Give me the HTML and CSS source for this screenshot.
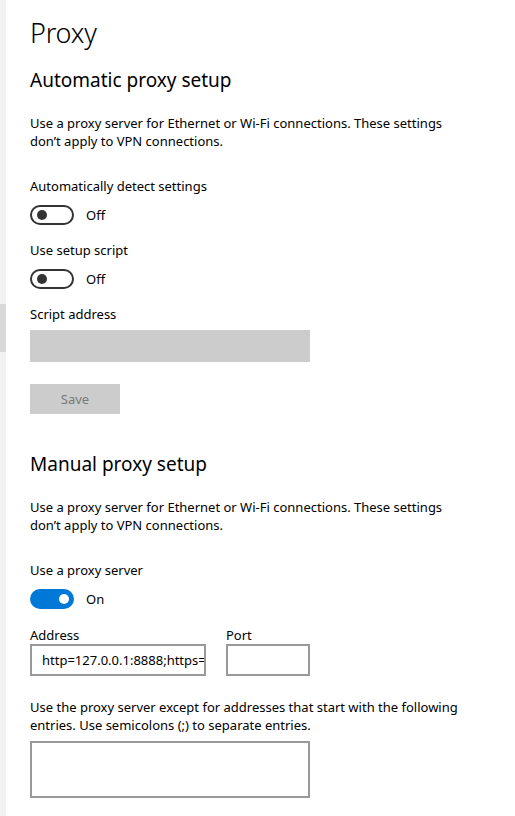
FILE: index.html
```html
<!DOCTYPE html>
<html lang="en">
<head>
<meta charset="utf-8">
<title>Proxy</title>
<link rel="stylesheet" href="styles.css">
</head>
<body>
<div class="app">
  <nav class="rail"><div class="rail-sel"></div></nav>
  <main class="content">
    <h1 class="page-title">Proxy</h1>

    <section class="group">
      <h2 class="group-title">Automatic proxy setup</h2>
      <p class="desc">Use a proxy server for Ethernet or Wi-Fi connections. These settings don’t apply to VPN connections.</p>

      <div class="setting">
        <div class="label">Automatically detect settings</div>
        <div class="toggle-row">
          <span class="toggle off"><span class="knob"></span></span>
          <span class="state">Off</span>
        </div>
      </div>

      <div class="setting">
        <div class="label">Use setup script</div>
        <div class="toggle-row">
          <span class="toggle off"><span class="knob"></span></span>
          <span class="state">Off</span>
        </div>
      </div>

      <div class="setting">
        <div class="label">Script address</div>
        <div class="input disabled"></div>
      </div>

      <button class="btn disabled">Save</button>
    </section>

    <section class="group manual">
      <h2 class="group-title">Manual proxy setup</h2>
      <p class="desc">Use a proxy server for Ethernet or Wi-Fi connections. These settings don’t apply to VPN connections.</p>

      <div class="setting">
        <div class="label">Use a proxy server</div>
        <div class="toggle-row">
          <span class="toggle on"><span class="knob"></span></span>
          <span class="state">On</span>
        </div>
      </div>

      <div class="addr-row">
        <div class="field">
          <div class="label">Address</div>
          <div class="input text addr">http=127.0.0.1:8888;https=127.0.0.1:8888</div>
        </div>
        <div class="field">
          <div class="label">Port</div>
          <div class="input text port"></div>
        </div>
      </div>

      <p class="desc except">Use the proxy server except for addresses that start with the following entries. Use semicolons (;) to separate entries.</p>
      <div class="input text area"></div>
    </section>
  </main>
</div>
</body>
</html>
```

FILE: styles.css
```css
* { box-sizing: border-box; }
html, body { margin: 0; padding: 0; background: #ffffff; }
body {
  font-family: "Noto Sans", "Open Sans", "Liberation Sans", sans-serif;
  color: #000000;
  font-size: 13px;
}
.app {
  display: flex;
  min-height: 816px;
}
.rail {
  width: 6px;
  flex: none;
  background: #f2f2f2;
  padding-top: 304px;
}
.rail-sel {
  height: 48px;
  background: #d9d9d9;
}
.content {
  flex: 1;
  padding: 14px 0 0 24px;
}
.page-title {
  margin: 0;
  font-size: 27px;
  font-weight: 300;
  line-height: 38px;
  letter-spacing: -0.2px;
}
.group-title {
  margin: 15px 0 0 0;
  font-size: 19px;
  font-weight: 400;
  line-height: 26px;
}
.desc {
  margin: 21px 0 0 0;
  line-height: 18px;
  width: 430px;
}
.setting { margin-top: 27px; }
.setting + .setting { margin-top: 16px; }
.label { line-height: 18px; }
.toggle-row {
  display: flex;
  align-items: center;
  margin-top: 10px;
  height: 20px;
}
.toggle {
  width: 44px;
  height: 20px;
  border-radius: 10px;
  display: flex;
  align-items: center;
  padding: 0 4px;
  flex: none;
}
.toggle.off { border: 2px solid #333333; }
.toggle.on { background: #0078d7; justify-content: flex-end; }
.knob {
  width: 10px;
  height: 10px;
  border-radius: 50%;
}
.toggle.off .knob { background: #333333; margin-left: 1px; }
.toggle.on .knob { background: #ffffff; margin-right: 1px; }
.state { margin-left: 12px; }
.input { height: 32px; }
.input.disabled {
  margin-top: 7px;
  width: 280px;
  background: #cccccc;
}
.btn {
  display: block;
  margin-top: 22px;
  width: 90px;
  height: 30px;
  border: 0;
  padding: 0;
  font: inherit;
  font-size: 13px;
}
.btn.disabled { background: #cccccc; color: #7a7a7a; }
.manual .group-title { margin-top: 37px; }
.input.text {
  border: 2px solid #999999;
  background: #ffffff;
  padding: 0 8px 0 10px;
  line-height: 28px;
  white-space: nowrap;
  overflow: hidden;
}
.addr-row {
  display: flex;
  gap: 20px;
  margin-top: 17px;
}
.addr { width: 176px; }
.port { width: 84px; }
.except { margin-top: 22px; }
.area {
  margin-top: 7px;
  width: 280px;
  height: 57px;
}
```
